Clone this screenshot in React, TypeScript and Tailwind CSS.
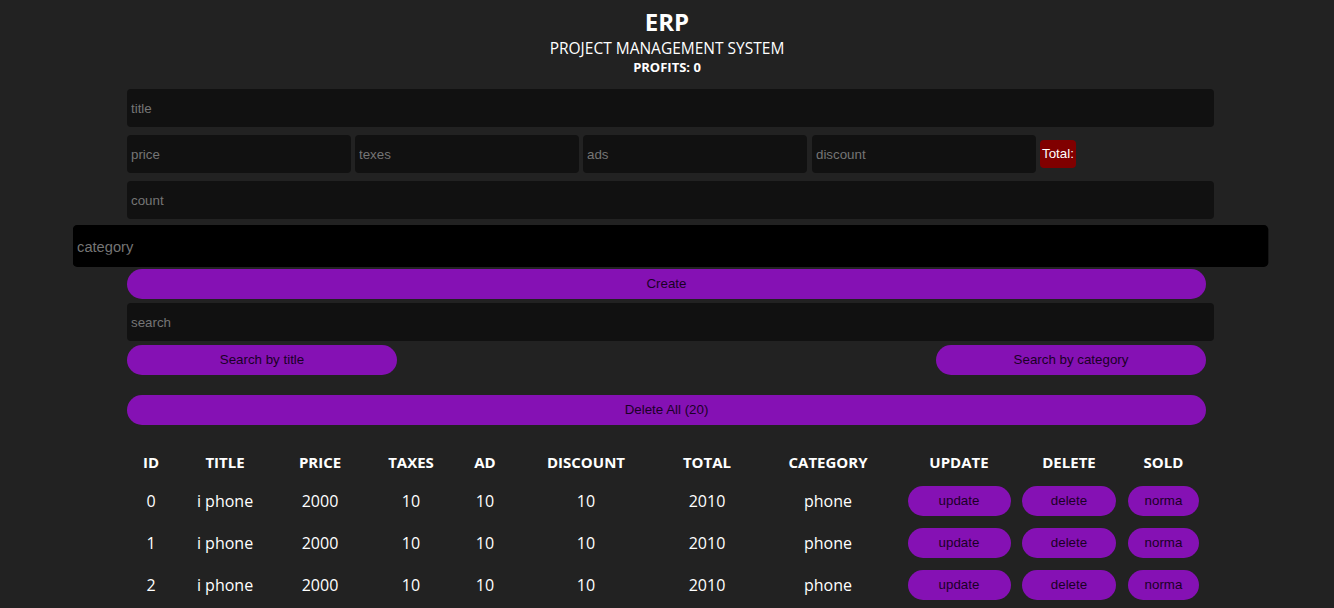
import React from 'react';

const rows = [0, 1, 2];

const head = ['ID', 'TITLE', 'PRICE', 'TAXES', 'AD', 'DISCOUNT', 'TOTAL', 'CATEGORY', 'UPDATE', 'DELETE', 'SOLD'];
const colW = ['w-[48px]', 'w-[100px]', 'w-[90px]', 'w-[92px]', 'w-[56px]', 'w-[146px]', 'w-[96px]', 'w-[146px]', 'w-[116px]', 'w-[104px]', 'w-[85px]'];

const input = 'h-[38px] rounded bg-[#111111] px-1 text-[13.33px] text-white placeholder:text-[#757575] outline-none font-["Liberation_Sans",Arial,sans-serif]';
const btn = 'h-[30px] rounded-full bg-[#8511b4] text-[13.33px] text-[#1a0026] font-["Liberation_Sans",Arial,sans-serif]';

export default function App() {
  return (
    <div className="min-h-[608px] bg-[#222222] text-white font-['Open_Sans',sans-serif]">
      <header className="flex flex-col items-center pt-[6px]">
        <h1 className="text-[24px] font-bold leading-[32px]">ERP</h1>
        <p className="text-[15.5px] leading-[20px]">PROJECT MANAGEMENT SYSTEM</p>
        <p className="text-[13px] font-bold leading-[18px]">PROFITS: 0</p>
      </header>

      <div className="mx-auto flex w-[1080px] flex-col pt-[13px]">
        <input className={`${input} w-[1087px]`} placeholder="title" />
        <div className="mt-2 flex items-center gap-1">
          <input className={`${input} w-[224px]`} placeholder="price" />
          <input className={`${input} w-[224px]`} placeholder="texes" />
          <input className={`${input} w-[224px]`} placeholder="ads" />
          <input className={`${input} ml-[1px] w-[224px]`} placeholder="discount" />
          <span className="flex h-[28px] items-center rounded bg-[#800000] px-[2px] text-[13.33px] font-['Liberation_Sans',Arial,sans-serif]">Total:</span>
        </div>
        <input className={`${input} mt-2 w-[1087px]`} placeholder="count" />
        <input autoFocus className={`${input} mt-2 w-[1087px] scale-110 !bg-black`} placeholder="category" />
        <button className={`${btn} mt-1 w-[1079px]`}>Create</button>
        <input className={`${input} mt-1 w-[1087px]`} placeholder="search" />
        <div className="mt-1 flex w-[1079px] justify-between">
          <button className={`${btn} w-[270px]`}>Search by title</button>
          <button className={`${btn} w-[270px]`}>Search by category</button>
        </div>
        <button className={`${btn} mt-5 w-[1079px]`}>Delete All (20)</button>

        <table className="mt-[20px] w-[1079px] table-fixed text-center">
          <colgroup>
            {colW.map((w, i) => (
              <col key={i} className={w} />
            ))}
          </colgroup>
          <thead>
            <tr className="h-[35px]">
              {head.map((h) => (
                <th key={h} className="text-[15px] font-bold">{h}</th>
              ))}
            </tr>
          </thead>
          <tbody>
            {rows.map((r) => (
              <tr key={r} className="h-[42px] text-[16px]">
                <td>{r}</td>
                <td>i phone</td>
                <td>2000</td>
                <td>10</td>
                <td>10</td>
                <td>10</td>
                <td>2010</td>
                <td>phone</td>
                <td className="px-[6px]"><button className={`${btn} w-[103px]`}>update</button></td>
                <td className="px-[5px]"><button className={`${btn} w-[94px]`}>delete</button></td>
                <td className="px-[7px]"><button className={`${btn} w-[71px]`}>norma</button></td>
              </tr>
            ))}
          </tbody>
        </table>
      </div>
    </div>
  );
}
